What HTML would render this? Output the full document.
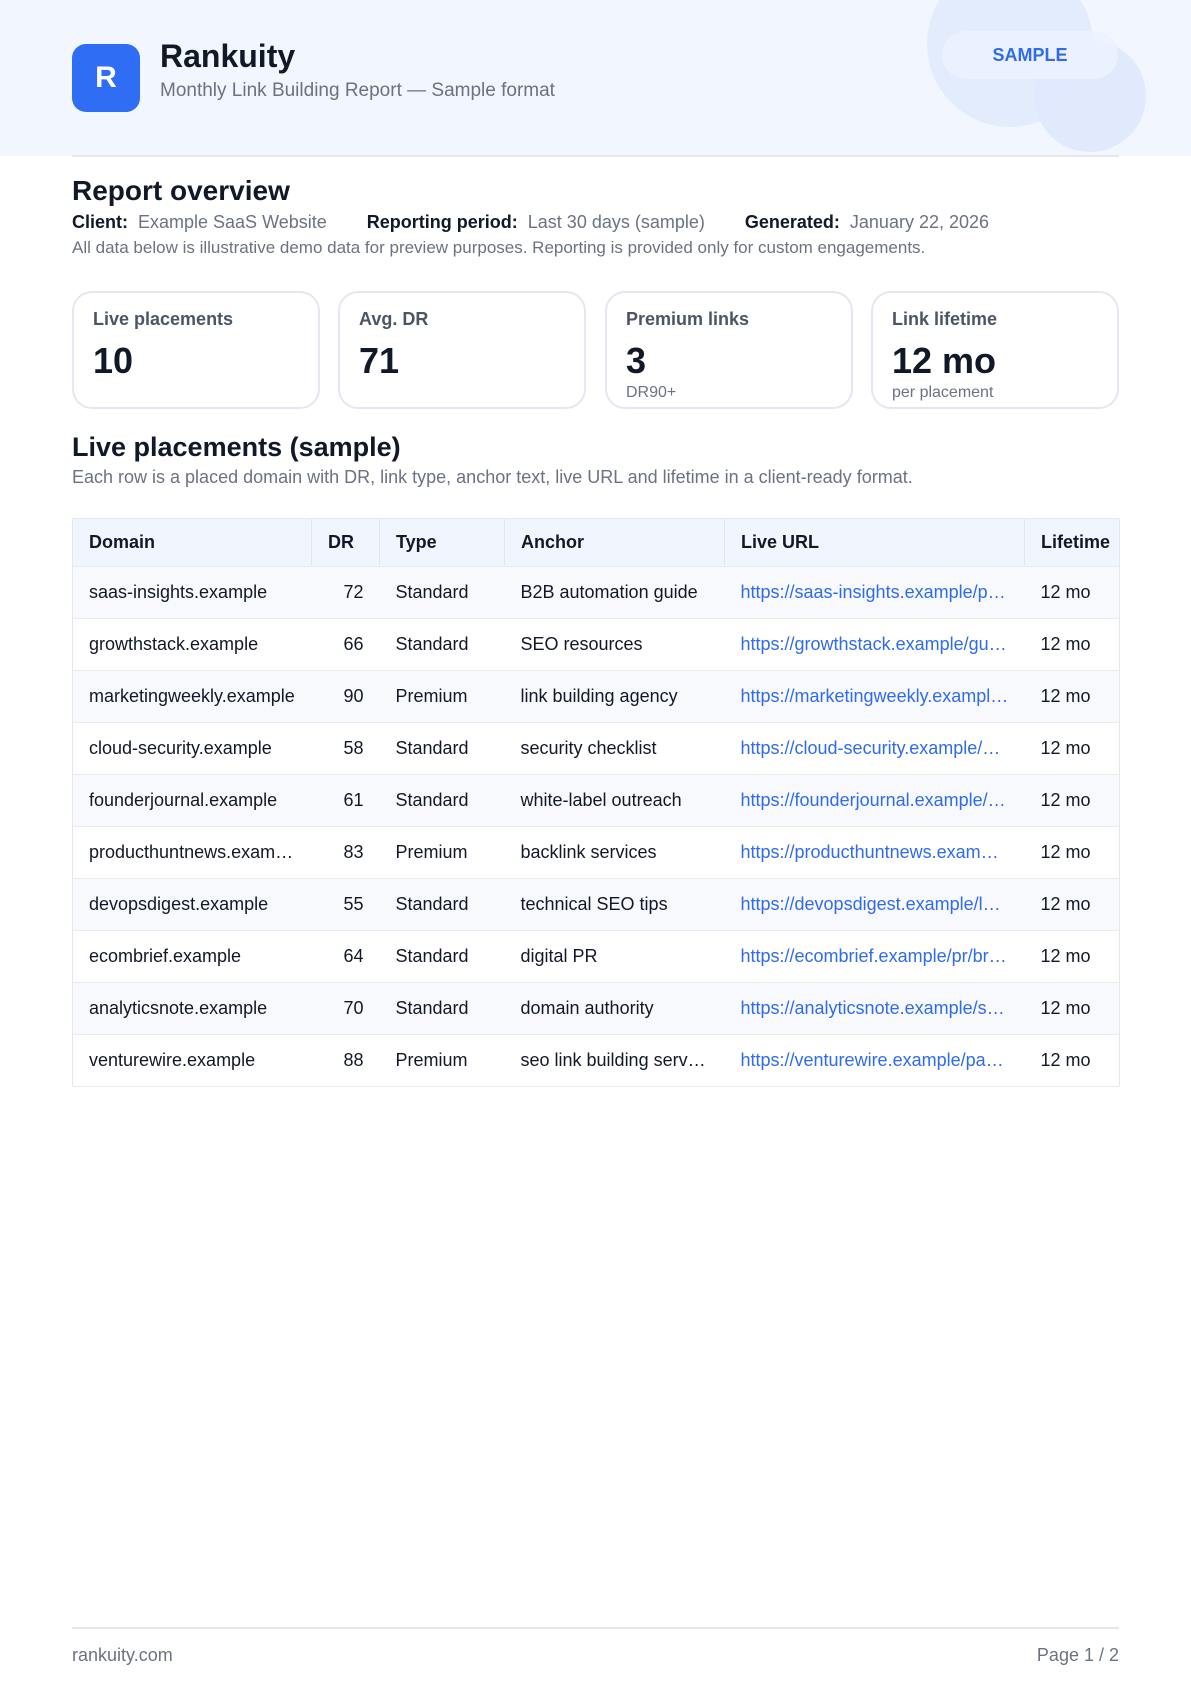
<!DOCTYPE html>
<html><head><meta charset="utf-8"><style>
*{margin:0;padding:0;box-sizing:border-box}
body{width:1191px;height:1684px;background:#fff;font-family:"Liberation Sans",Arial,sans-serif;color:#111827;position:relative;overflow:hidden}
.hdr{position:absolute;left:0;top:0;width:1191px;height:156px;background:#f1f6ff;overflow:hidden}
.c1{position:absolute;left:927px;top:-39px;width:166px;height:166px;border-radius:50%;background:#e3ecfd}
.c2{position:absolute;left:1034px;top:40px;width:112px;height:112px;border-radius:50%;background:#dfe9fd;opacity:.9}
.pill{position:absolute;left:942px;top:31px;width:176px;height:48px;border-radius:24px;background:rgba(236,242,255,.85);color:#2f6bea;font-weight:bold;font-size:18px;text-align:center;line-height:48px}
.logo{position:absolute;left:72px;top:44px;width:68px;height:68px;border-radius:14px;background:#2f6df5;color:#fff;font-weight:bold;font-size:30px;text-align:center;line-height:68px}
.t1{position:absolute;left:160px;top:38px;font-size:32px;font-weight:bold}
.t2{position:absolute;left:160px;top:80px;font-size:19px;color:#6b7280}
.hl{position:absolute;left:72px;top:155px;width:1047px;height:2px;background:#e5e7eb}
.h2{position:absolute;left:72px;font-size:28px;font-weight:bold}
.meta{position:absolute;left:72px;top:212px;font-size:18px;color:#6b7280;white-space:nowrap}
.meta b{color:#111827}
.note{position:absolute;left:72px;top:238px;font-size:17px;color:#6b7280;white-space:nowrap}
.card{position:absolute;top:291px;width:248px;height:118px;border:2px solid #e3e8f0;border-radius:20px;padding:16px 0 0 19px}
.card .l{font-size:18px;font-weight:bold;color:#4b5563}
.card .v{font-size:36px;font-weight:bold;margin-top:11px;line-height:40px}
.card .s{font-size:16px;color:#6b7280;margin-top:3px}
.desc{position:absolute;left:72px;top:467px;font-size:18px;color:#6b7280}
table{position:absolute;left:72px;top:518px;width:1047px;border-collapse:collapse;font-size:18px;border:1px solid #e3e8f0;table-layout:fixed}
td,th{height:52px;padding:0 16px;white-space:nowrap;overflow:hidden;text-overflow:ellipsis;text-align:left;border-bottom:1px solid #e8ecf2}
th{height:48px;background:#f1f5fd;font-weight:bold;border-right:1px solid #e3e8f0}
th:last-child{border-right:none;text-overflow:clip}
tr:nth-child(even) td{background:#f8f9fd}
td.n{text-align:right}
td.u{color:#2f6bea}
.fl{position:absolute;left:72px;top:1627px;width:1047px;height:2px;background:#e5e7eb}
.ft{position:absolute;top:1645px;font-size:18px;color:#6b7280}
</style></head><body>
<div class="hdr"><div class="c1"></div><div class="c2"></div><div class="pill">SAMPLE</div></div>
<div class="logo">R</div>
<div class="t1">Rankuity</div>
<div class="t2">Monthly Link Building Report — Sample format</div>
<div class="hl"></div>
<div class="h2" style="top:175px">Report overview</div>
<div class="meta"><b>Client:</b>&nbsp; Example SaaS Website &nbsp;&nbsp;&nbsp;&nbsp;&nbsp;&nbsp;&nbsp;<b>Reporting period:</b>&nbsp; Last 30 days (sample) &nbsp;&nbsp;&nbsp;&nbsp;&nbsp;&nbsp;&nbsp;<b>Generated:</b>&nbsp; January 22, 2026</div>
<div class="note">All data below is illustrative demo data for preview purposes. Reporting is provided only for custom engagements.</div>
<div class="card" style="left:72px"><div class="l">Live placements</div><div class="v">10</div></div>
<div class="card" style="left:338px"><div class="l">Avg. DR</div><div class="v">71</div></div>
<div class="card" style="left:605px"><div class="l">Premium links</div><div class="v">3</div><div class="s">DR90+</div></div>
<div class="card" style="left:871px"><div class="l">Link lifetime</div><div class="v">12 mo</div><div class="s">per placement</div></div>
<div class="h2" style="top:432px;font-size:27px">Live placements (sample)</div>
<div class="desc">Each row is a placed domain with DR, link type, anchor text, live URL and lifetime in a client-ready format.</div>
<table>
<colgroup><col style="width:239px"><col style="width:68px"><col style="width:125px"><col style="width:220px"><col style="width:300px"><col style="width:95px"></colgroup>
<tr><th>Domain</th><th>DR</th><th>Type</th><th>Anchor</th><th>Live URL</th><th>Lifetime</th></tr>
<tr><td>saas-insights.example</td><td class="n">72</td><td>Standard</td><td>B2B automation guide</td><td class="u">https://saas-insights.example/posts/b2b</td><td>12 mo</td></tr>
<tr><td>growthstack.example</td><td class="n">66</td><td>Standard</td><td>SEO resources</td><td class="u">https://growthstack.example/guides/seo</td><td>12 mo</td></tr>
<tr><td>marketingweekly.example</td><td class="n">90</td><td>Premium</td><td>link building agency</td><td class="u">https://marketingweekly.example/agency</td><td>12 mo</td></tr>
<tr><td>cloud-security.example</td><td class="n">58</td><td>Standard</td><td>security checklist</td><td class="u">https://cloud-security.example/checklist</td><td>12 mo</td></tr>
<tr><td>founderjournal.example</td><td class="n">61</td><td>Standard</td><td>white-label outreach</td><td class="u">https://founderjournal.example/outreach</td><td>12 mo</td></tr>
<tr><td>producthuntnews.example</td><td class="n">83</td><td>Premium</td><td>backlink services</td><td class="u">https://producthuntnews.example/backlinks</td><td>12 mo</td></tr>
<tr><td>devopsdigest.example</td><td class="n">55</td><td>Standard</td><td>technical SEO tips</td><td class="u">https://devopsdigest.example/learn/seo</td><td>12 mo</td></tr>
<tr><td>ecombrief.example</td><td class="n">64</td><td>Standard</td><td>digital PR</td><td class="u">https://ecombrief.example/pr/brand</td><td>12 mo</td></tr>
<tr><td>analyticsnote.example</td><td class="n">70</td><td>Standard</td><td>domain authority</td><td class="u">https://analyticsnote.example/seo/da</td><td>12 mo</td></tr>
<tr><td>venturewire.example</td><td class="n">88</td><td>Premium</td><td>seo link building services</td><td class="u">https://venturewire.example/partners</td><td>12 mo</td></tr>
</table>
<div class="fl"></div>
<div class="ft" style="left:72px">rankuity.com</div>
<div class="ft" style="right:72px">Page 1 / 2</div>
</body></html>
